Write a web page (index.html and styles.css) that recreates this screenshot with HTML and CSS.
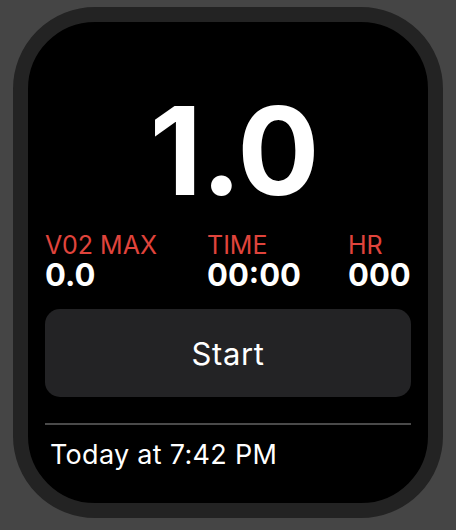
FILE: index.html
```html
<!DOCTYPE html>
<html>
<head>
<meta charset="utf-8">
<link rel="stylesheet" href="styles.css">
</head>
<body>
<div class="watch">
  <div class="screen">
    <div class="big">1.0</div>
    <div class="stats">
      <div class="stat s1"><div class="label">V02 MAX</div><div class="value">0.0</div></div>
      <div class="stat s2"><div class="label">TIME</div><div class="value">00:00</div></div>
      <div class="stat s3"><div class="label">HR</div><div class="value">000</div></div>
    </div>
    <div class="btn">Start</div>
    <div class="divider"></div>
    <div class="footer">Today at 7:42 PM</div>
  </div>
</div>
</body>
</html>
```
FILE: styles.css
```css
html, body {
  margin: 0;
  padding: 0;
  background: #454545;
  width: 456px;
  height: 530px;
  overflow: hidden;
  font-family: Inter, "Noto Sans", sans-serif;
}
.watch {
  margin: 7px 0 0 13px;
  width: 430px;
  height: 511px;
  box-sizing: border-box;
  border: 15px solid #232323;
  border-radius: 82px;
  background: #000;
  overflow: hidden;
}
.screen {
  display: flex;
  flex-direction: column;
  padding: 0 17px;
  color: #fff;
}
.big {
  margin-top: 66px;
  height: 125px;
  font-size: 122px;
  font-weight: 700;
  line-height: 125px;
  text-align: center;
  padding-left: 12px;
  letter-spacing: -1px;
}
.stats {
  display: flex;
  margin-top: 18px;
}
.stat { display: flex; flex-direction: column; }
.s1 { width: 162px; }
.s2 { width: 141px; }
.label {
  color: #e0443c;
  font-size: 25px;
  line-height: 28px;
  font-weight: 400;
}
.value {
  font-size: 31px;
  font-weight: 700;
  line-height: 32px;
}
.btn {
  margin-top: 18px;
  height: 88px;
  border-radius: 15px;
  background: #232325;
  display: flex;
  align-items: center;
  justify-content: center;
  font-size: 31px;
  font-weight: 400;
  letter-spacing: 0.6px;
}
.divider {
  margin-top: 26px;
  height: 2px;
  background: #4a4a4a;
}
.footer {
  margin-top: 14px;
  margin-left: 5px;
  font-size: 27px;
  line-height: 32px;
  letter-spacing: 0.3px;
}
```
